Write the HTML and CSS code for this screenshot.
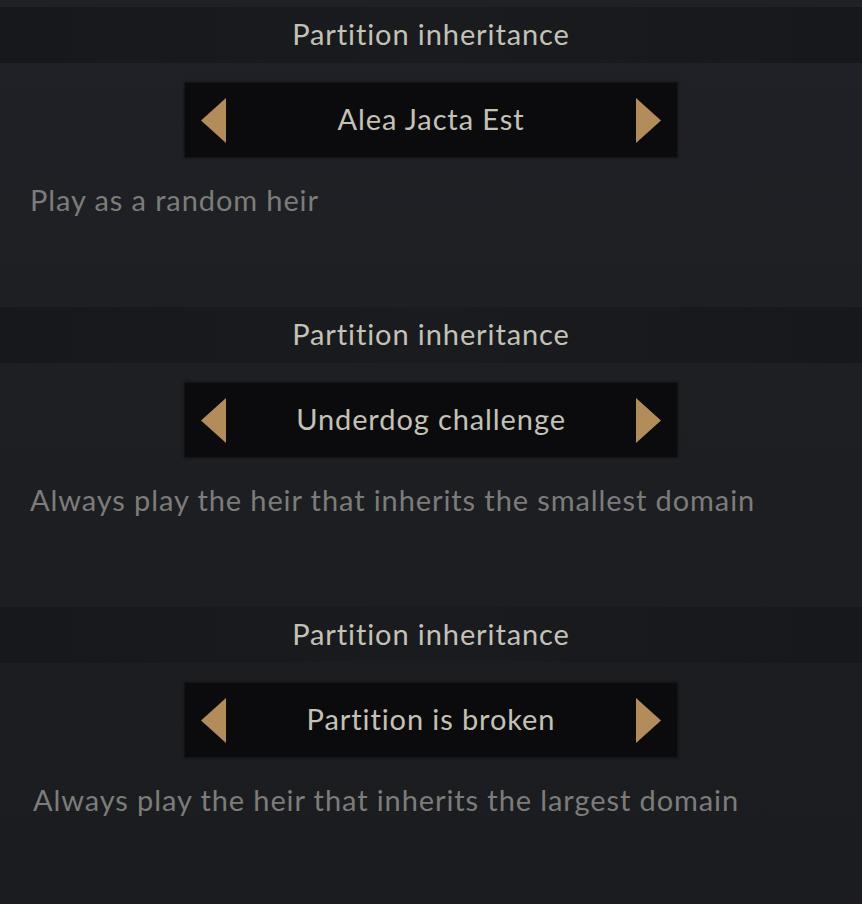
FILE: index.html
```html
<!DOCTYPE html>
<html lang="en">
<head>
<meta charset="utf-8">
<title>Partition inheritance</title>
<link rel="stylesheet" href="styles.css">
</head>
<body>
<main class="list">
  <section class="option">
    <div class="band"><h2 class="title">Partition inheritance</h2></div>
    <div class="selector">
      <button class="arrow" aria-label="Previous"><svg viewBox="0 0 25 45" width="25" height="45"><polygon points="0,22.5 25,0 25,45" fill="#b38c5b"/></svg></button>
      <span class="value">Alea Jacta Est</span>
      <button class="arrow" aria-label="Next"><svg viewBox="0 0 25 45" width="25" height="45"><polygon points="25,22.5 0,0 0,45" fill="#b38c5b"/></svg></button>
    </div>
    <p class="desc">Play as a random heir</p>
  </section>
  <section class="option">
    <div class="band"><h2 class="title">Partition inheritance</h2></div>
    <div class="selector">
      <button class="arrow" aria-label="Previous"><svg viewBox="0 0 25 45" width="25" height="45"><polygon points="0,22.5 25,0 25,45" fill="#b38c5b"/></svg></button>
      <span class="value">Underdog challenge</span>
      <button class="arrow" aria-label="Next"><svg viewBox="0 0 25 45" width="25" height="45"><polygon points="25,22.5 0,0 0,45" fill="#b38c5b"/></svg></button>
    </div>
    <p class="desc">Always play the heir that inherits the smallest domain</p>
  </section>
  <section class="option">
    <div class="band"><h2 class="title">Partition inheritance</h2></div>
    <div class="selector">
      <button class="arrow" aria-label="Previous"><svg viewBox="0 0 25 45" width="25" height="45"><polygon points="0,22.5 25,0 25,45" fill="#b38c5b"/></svg></button>
      <span class="value">Partition is broken</span>
      <button class="arrow" aria-label="Next"><svg viewBox="0 0 25 45" width="25" height="45"><polygon points="25,22.5 0,0 0,45" fill="#b38c5b"/></svg></button>
    </div>
    <p class="desc desc-shift">Always play the heir that inherits the largest domain</p>
  </section>
</main>
</body>
</html>
```
FILE: styles.css
```css
html, body {
  margin: 0;
  padding: 0;
}
body {
  width: 862px;
  height: 904px;
  overflow: hidden;
  background: linear-gradient(180deg, #202126 0%, #1d1e22 60%, #1b1c20 100%);
  font-family: Lato, "Open Sans", sans-serif;
  font-variant-ligatures: none;
  letter-spacing: 0.9px;
}
.list {
  display: flex;
  flex-direction: column;
  padding-top: 7px;
}
.option {
  height: 300px;
  display: flex;
  flex-direction: column;
}
.band {
  height: 56px;
  box-sizing: border-box;
  padding-bottom: 4px;
  display: flex;
  align-items: center;
  justify-content: center;
  background: linear-gradient(90deg, #17181b 0%, #1a1b1f 50%, #17181b 100%);
}
.title {
  margin: 0;
  font-weight: 400;
  font-size: 29px;
  color: #c4c1b7;
  line-height: 1;
}
.selector {
  margin: 20px 0 0 185px;
  width: 492px;
  height: 74px;
  box-sizing: border-box;
  padding: 0 16px;
  display: flex;
  align-items: center;
  justify-content: space-between;
  background: #0b0b0d;
  box-shadow: 0 0 2px 1px #111114;
}
.arrow {
  border: 0;
  padding: 0;
  background: none;
  display: flex;
  width: 25px;
  height: 45px;
}
.value {
  font-size: 29px;
  color: #c4c1b7;
  line-height: 1;
  padding-bottom: 4px;
}
.desc {
  margin: 25px 0 0 30px;
  font-size: 29px;
  line-height: 36px;
  color: #7c7c7a;
}
.desc-shift {
  margin-left: 33px;
}
```
